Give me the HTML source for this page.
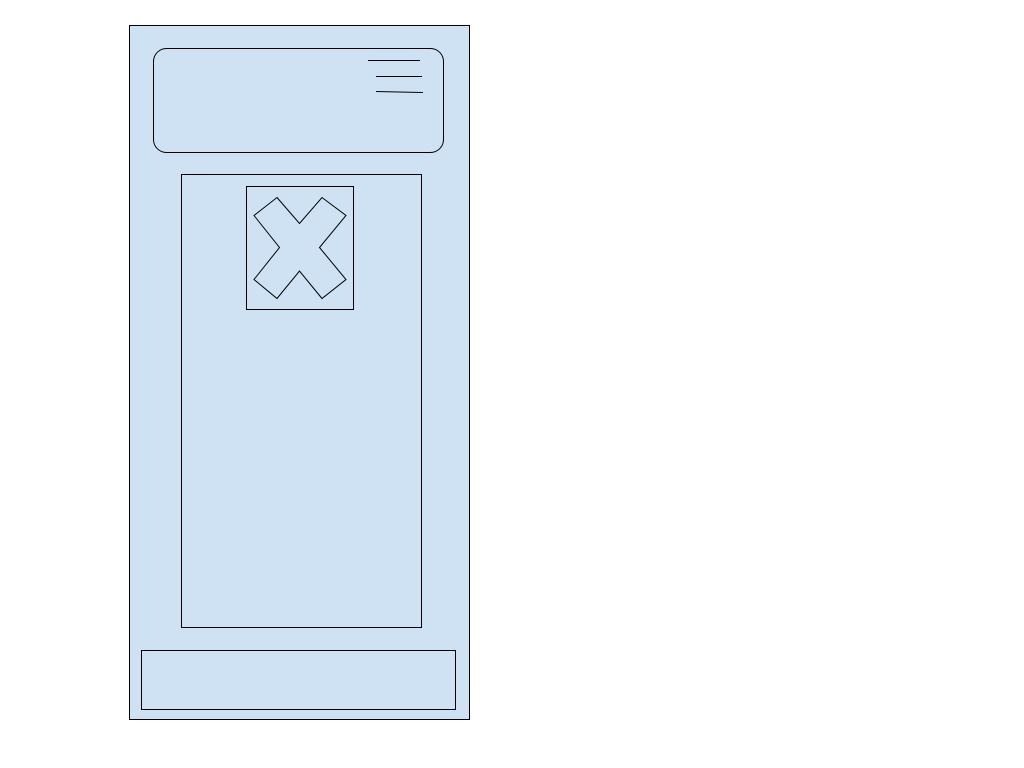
<!DOCTYPE html>
<html><head><style>html,body{margin:0;padding:0;background:#fff;width:1024px;height:768px;overflow:hidden}</style></head>
<body>
<svg width="1024" height="768" xmlns="http://www.w3.org/2000/svg" style="display:block">
<rect x="129.5" y="25.5" width="340" height="694" fill="#cfe2f3" stroke="#000" stroke-width="1"/>
<rect x="153.5" y="48.5" width="290" height="104" rx="13" ry="13" fill="#cfe2f3" stroke="#000" stroke-width="1"/>
<line x1="368" y1="60.5" x2="420" y2="60.5" stroke="#000" stroke-width="1"/>
<line x1="376" y1="76.5" x2="422" y2="76.5" stroke="#000" stroke-width="1"/>
<line x1="376" y1="91.5" x2="423" y2="92.5" stroke="#000" stroke-width="1"/>
<rect x="181.5" y="174.5" width="240" height="453" fill="#cfe2f3" stroke="#000" stroke-width="1"/>
<rect x="246.5" y="186.5" width="107" height="123" fill="#cfe2f3" stroke="#000" stroke-width="1"/>
<polygon points="277,197.5 299.5,223.5 322,197.5 346,215.5 319.5,247.5 346,279.5 322,298.5 299.5,271 277,298.5 254,279.5 279.5,247.5 254,215.5" fill="none" stroke="#000" stroke-width="1"/>
<rect x="141.5" y="650.5" width="314" height="59" fill="#cfe2f3" stroke="#000" stroke-width="1"/>
</svg>
</body></html>
